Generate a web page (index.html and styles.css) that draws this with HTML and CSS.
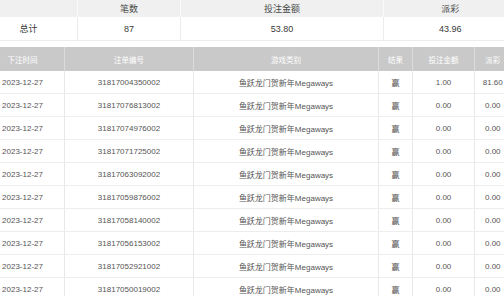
FILE: index.html
```html
<!DOCTYPE html>
<html lang="zh">
<head>
<meta charset="utf-8">
<link rel="stylesheet" href="styles.css">
</head>
<body>
<div class="page">
  <table class="summary">
    <colgroup><col class="s1"><col class="s2"><col class="s3"><col class="s4"></colgroup>
    <thead>
      <tr><th></th><th>笔数</th><th>投注金额</th><th>派彩</th></tr>
    </thead>
    <tbody>
      <tr><td>总计</td><td>87</td><td>53.80</td><td>43.96</td></tr>
    </tbody>
  </table>
  <table class="list">
    <colgroup><col class="c1"><col class="c2"><col class="c3"><col class="c4"><col class="c5"><col class="c6"></colgroup>
    <thead>
      <tr><th>下注时间</th><th>注单编号</th><th>游戏类别</th><th>结果</th><th>投注金额</th><th>派彩</th></tr>
    </thead>
    <tbody>
      <tr><td>2023-12-27</td><td>31817004350002</td><td>鱼跃龙门贺新年Megaways</td><td>赢</td><td>1.00</td><td>81.60</td></tr>
      <tr><td>2023-12-27</td><td>31817076813002</td><td>鱼跃龙门贺新年Megaways</td><td>赢</td><td>0.00</td><td>0.00</td></tr>
      <tr><td>2023-12-27</td><td>31817074976002</td><td>鱼跃龙门贺新年Megaways</td><td>赢</td><td>0.00</td><td>0.00</td></tr>
      <tr><td>2023-12-27</td><td>31817071725002</td><td>鱼跃龙门贺新年Megaways</td><td>赢</td><td>0.00</td><td>0.00</td></tr>
      <tr><td>2023-12-27</td><td>31817063092002</td><td>鱼跃龙门贺新年Megaways</td><td>赢</td><td>0.00</td><td>0.00</td></tr>
      <tr><td>2023-12-27</td><td>31817059876002</td><td>鱼跃龙门贺新年Megaways</td><td>赢</td><td>0.00</td><td>0.00</td></tr>
      <tr><td>2023-12-27</td><td>31817058140002</td><td>鱼跃龙门贺新年Megaways</td><td>赢</td><td>0.00</td><td>0.00</td></tr>
      <tr><td>2023-12-27</td><td>31817056153002</td><td>鱼跃龙门贺新年Megaways</td><td>赢</td><td>0.00</td><td>0.00</td></tr>
      <tr><td>2023-12-27</td><td>31817052921002</td><td>鱼跃龙门贺新年Megaways</td><td>赢</td><td>0.00</td><td>0.00</td></tr>
      <tr><td>2023-12-27</td><td>31817050019002</td><td>鱼跃龙门贺新年Megaways</td><td>赢</td><td>0.00</td><td>0.00</td></tr>
    </tbody>
  </table>
</div>
</body>
</html>
```
FILE: styles.css
```css
html, body {
  margin: 0;
  padding: 0;
  background: #ffffff;
  overflow: hidden;
}
.page {
  margin-left: -21px;
  width: 540px;
  font-family: "Liberation Sans", "Noto Sans CJK SC", sans-serif;
  color: #444;
}
table {
  border-collapse: collapse;
  table-layout: fixed;
}
th, td {
  padding: 0;
  text-align: center;
  white-space: nowrap;
  overflow: hidden;
}
.summary {
  width: 537px;
  font-size: 9px;
}
.summary .s1 { width: 98px; }
.summary .s2 { width: 103px; }
.summary .s3 { width: 203px; }
.summary .s4 { width: 133px; }
.summary th {
  height: 17px;
  background: #f0f0f0;
  font-weight: normal;
  color: #4a4a4a;
  border-left: 1px solid #fafafa;
}
.summary td {
  height: 23px;
  border-left: 1px solid #ececec;
  border-bottom: 1px solid #ececec;
  color: #3a3a3a;
}
.list {
  margin-top: 6px;
  margin-left: 1px;
  width: 530px;
  font-size: 8px;
}
.list .c1 { width: 84px; }
.list .c2 { width: 129px; }
.list .c3 { width: 185px; }
.list .c4 { width: 34px; }
.list .c5 { width: 62px; }
.list .c6 { width: 36px; }
.list th {
  height: 24px;
  background: #c9c9c9;
  color: #ffffff;
  font-weight: normal;
  font-size: 7.5px;
  border-left: 1px solid #dcdcdc;
}
.list td {
  height: 22px;
  border-left: 1px solid #e8e8e8;
  border-bottom: 1px solid #ededed;
  color: #555;
}
.list .win {
  color: #666;
}
```
